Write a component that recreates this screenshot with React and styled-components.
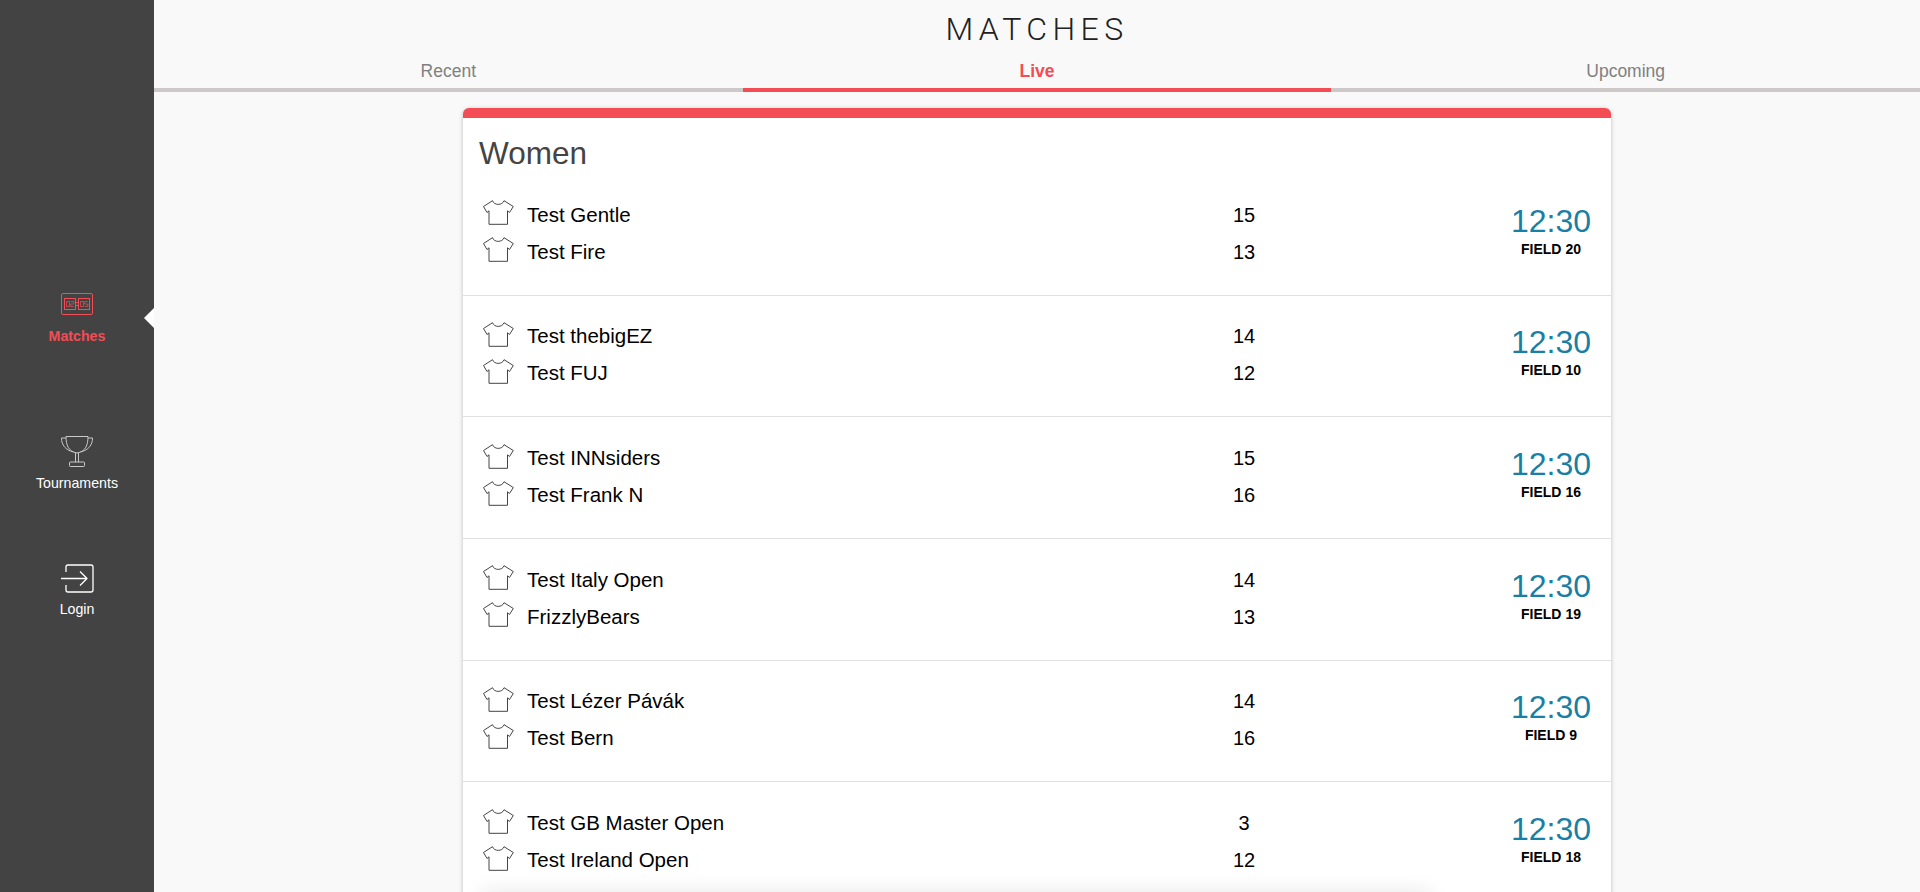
import React from "react";
import styled, { createGlobalStyle } from "styled-components";

const Global = createGlobalStyle`
  html, body {
    margin: 0;
    height: 100%;
    overflow: hidden;
    background: #f9f9f9;
    font-family: "Liberation Sans", Arial, sans-serif;
  }
`;

const Page = styled.div`
  display: flex;
  height: 100vh;
  overflow: hidden;
`;

const Sidebar = styled.nav`
  flex: 0 0 154px;
  display: flex;
  flex-direction: column;
  padding-top: 288px;
  box-sizing: border-box;
  background: #434343;
`;

const NavItem = styled.a`
  position: relative;
  display: flex;
  flex-direction: column;
  align-items: center;
  height: ${({ $height }) => $height}px;
  color: ${({ $active }) => ($active ? "#f44c55" : "#fff")};
  font-size: 14.2px;
  font-weight: ${({ $active }) => ($active ? 700 : 400)};
  line-height: 16px;
`;

const NavIcon = styled.span`
  display: flex;
  align-items: center;
  justify-content: center;
  height: 32px;
  margin-bottom: 8px;
`;

const Arrow = styled.span`
  position: absolute;
  right: 0;
  top: 20px;
  border-style: solid;
  border-width: 10px 10px 10px 0;
  border-color: transparent #fff transparent transparent;
`;

const Main = styled.main`
  flex: 1;
  min-width: 0;
  display: flex;
  flex-direction: column;
  align-items: center;
`;

const Title = styled.h1`
  margin: 0;
  padding-top: 11px;
  font-family: Roboto, "Liberation Sans", sans-serif;
  font-size: 32px;
  line-height: 36px;
  font-weight: 300;
  letter-spacing: 5.4px;
  color: #222;
`;

const Tabs = styled.div`
  align-self: stretch;
  display: grid;
  grid-template-columns: repeat(3, 1fr);
`;

const Tab = styled.div`
  height: 29px;
  padding-top: 12px;
  line-height: 24px;
  text-align: center;
  font-size: 17.5px;
  font-weight: ${({ $active }) => ($active ? 700 : 400)};
  color: ${({ $active }) => ($active ? "#f44c55" : "#808080")};
  border-bottom: 4px solid ${({ $active }) => ($active ? "#f44c55" : "#cdc9c9")};
`;

const Card = styled.section`
  position: relative;
  width: 1148px;
  margin-top: 16px;
  border-top: 10px solid #f44c55;
  border-radius: 6px 6px 0 0;
  background: #fff;
  box-shadow: 0 1px 4px rgba(0, 0, 0, 0.25);
`;

const CardTitle = styled.h2`
  margin: 0;
  padding: 16px 16px 0;
  height: 40px;
  font-size: 31.5px;
  line-height: 38px;
  font-weight: 400;
  color: #444;
`;

const Row = styled.div`
  display: grid;
  grid-template-columns: 721px 80px 1fr 120px;
  align-items: center;
  height: 121.67px;
  box-sizing: border-box;
  padding-left: 20px;
  padding-bottom: 2px;
  border-bottom: 1px solid #e0e0e0;
`;

const Teams = styled.div`
  display: flex;
  flex-direction: column;
  gap: 13px;
`;

const Team = styled.div`
  display: flex;
  align-items: center;
  gap: 13px;
  height: 24px;
  font-size: 20.5px;
  color: #000;
`;

const Scores = styled.div`
  display: flex;
  flex-direction: column;
  gap: 13px;
  text-align: center;
  font-size: 20px;
  line-height: 24px;
  color: #000;
`;

const Info = styled.div`
  grid-column: 4;
  display: flex;
  flex-direction: column;
  align-items: center;
  margin-bottom: 7px;
`;

const Time = styled.div`
  font-size: 32px;
  line-height: 36px;
  color: #1a7fa5;
`;

const Field = styled.div`
  margin-top: 2px;
  font-size: 14px;
  font-weight: 700;
  line-height: 16px;
  color: #000;
`;

const BottomFade = styled.div`
  position: fixed;
  left: 482px;
  bottom: -24px;
  width: 948px;
  height: 20px;
  box-shadow: 0 0 24px rgba(0, 0, 0, 0.14);
  background: #eee;
`;

const ShirtSvg = styled.svg`
  flex: none;
  margin-top: -4px;
`;

const LoginSvg = styled.svg`
  margin-top: 3px;
`;

const Shirt = () => (
  <ShirtSvg width="31" height="25" viewBox="0 0 31 25" fill="none" stroke="#444" strokeWidth="1" strokeLinejoin="round">
    <path d="M9.500 .7 C11 5.600 19.500 5.600 21 .7 L30.300 6.500 L26.500 12.500 L24.500 10.800 V24.300 H6 V10.800 L4 12.500 L.5 6.500 Z" />
  </ShirtSvg>
);

const Scoreboard = () => (
  <svg width="34" height="24" viewBox="0 0 34 24" fill="none" stroke="#f44c55" strokeWidth="1">
    <rect x="1.500" y="1.500" width="31" height="21" rx="1.500" />
    <rect x="4.500" y="6.500" width="11" height="11" />
    <rect x="18.500" y="6.500" width="11" height="11" />
    <path d="M6.500 9.500h3v5h-3zM10.800 9.500h3v2.500h-3v2.500h3M20.500 9.500h3v5h-3zM27.800 9.500h-3v2.500h3v2.500h-3" strokeWidth=".7" />
    <path d="M16 10.500h2M16 13.500h2" />
  </svg>
);

const Trophy = () => (
  <svg width="34" height="32" viewBox="0 0 34 32" fill="none" stroke="#c9c9c9" strokeWidth="1">
    <path d="M6 1.500h22c0 8-2 15-11 16.500C8 16.500 6 9.500 6 1.500z" />
    <path d="M6 3H1.500c0 7 4 12 12 14M28 3h4.500c0 7-4 12-12 14" />
    <path d="M15.500 18v9M18.500 18v9" />
    <rect x="9.500" y="27" width="15" height="4.500" rx=".8" />
  </svg>
);

const LoginIcon = () => (
  <LoginSvg width="34" height="30" viewBox="0 0 34 30" fill="none" stroke="#fff" strokeWidth="1.300" strokeLinejoin="round">
    <path d="M6 8V3a2 2 0 0 1 2-2h23a2 2 0 0 1 2 2v23a2 2 0 0 1-2 2H8a2 2 0 0 1-2-2v-5" />
    <path d="M1 14.500h25M20 7.500l7 7-7 7" />
  </LoginSvg>
);

const matches = [
  ["Test Gentle", 15, "Test Fire", 13, 20],
  ["Test thebigEZ", 14, "Test FUJ", 12, 10],
  ["Test INNsiders", 15, "Test Frank N", 16, 16],
  ["Test Italy Open", 14, "FrizzlyBears", 13, 19],
  ["Test Lézer Pávák", 14, "Test Bern", 16, 9],
  ["Test GB Master Open", 3, "Test Ireland Open", 12, 18],
];

export default function App() {
  return (
    <>
      <Global />
      <Page>
        <Sidebar>
          <NavItem $active $height={147}>
            <NavIcon><Scoreboard /></NavIcon>
            Matches
            <Arrow />
          </NavItem>
          <NavItem $height={126}>
            <NavIcon><Trophy /></NavIcon>
            Tournaments
          </NavItem>
          <NavItem $height={60}>
            <NavIcon><LoginIcon /></NavIcon>
            Login
          </NavItem>
        </Sidebar>
        <Main>
          <Title>MATCHES</Title>
          <Tabs>
            <Tab>Recent</Tab>
            <Tab $active>Live</Tab>
            <Tab>Upcoming</Tab>
          </Tabs>
          <Card>
            <CardTitle>Women</CardTitle>
            {matches.map(([a, sa, b, sb, field]) => (
              <Row key={a}>
                <Teams>
                  <Team><Shirt />{a}</Team>
                  <Team><Shirt />{b}</Team>
                </Teams>
                <Scores>
                  <span>{sa}</span>
                  <span>{sb}</span>
                </Scores>
                <Info>
                  <Time>12:30</Time>
                  <Field>FIELD {field}</Field>
                </Info>
              </Row>
            ))}
          </Card>
          <BottomFade />
        </Main>
      </Page>
    </>
  );
}
